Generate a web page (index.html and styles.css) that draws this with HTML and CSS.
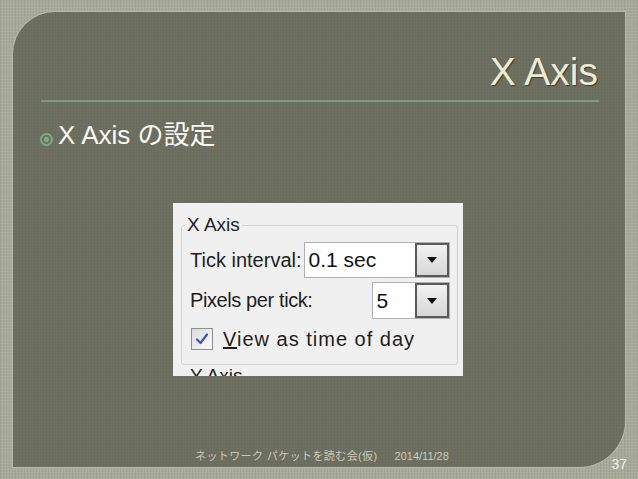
FILE: index.html
```html
<!DOCTYPE html>
<html lang="ja">
<head>
    <meta charset="UTF-8">
    <title>X Axis</title>
    <link rel="stylesheet" href="styles.css">
</head>
<body>
    <div class="slide">
        <div class="panel">
            <h1 class="title">X Axis</h1>
            <div class="rule"></div>
            <div class="bullet-row">
                <span class="bullet"></span>
                <span>X Axis の設定</span>
            </div>

            <div class="shot">
                <fieldset class="group">
                    <legend>X Axis</legend>
                    <div class="row row-tick">
                        <span class="label">Tick interval:</span>
                        <div class="combo combo-wide">
                            <span class="combo-value">0.1 sec</span>
                            <span class="combo-btn"><span class="arrow"></span></span>
                        </div>
                    </div>
                    <div class="row row-pixels">
                        <span class="label label-pixels">Pixels per tick:</span>
                        <div class="combo combo-small">
                            <span class="combo-value">5</span>
                            <span class="combo-btn"><span class="arrow"></span></span>
                        </div>
                    </div>
                    <div class="row row-check">
                        <span class="checkbox">
                            <svg width="14" height="14" viewBox="0 0 14 14">
                                <path d="M2 7.5 L5.5 11 L12 2.5" fill="none" stroke="#3f57a6" stroke-width="2.2" stroke-linejoin="round" stroke-linecap="round"/>
                            </svg>
                        </span>
                        <span class="check-label"><u>V</u>iew as time of day</span>
                    </div>
                </fieldset>
                <div class="next-group">Y Axis</div>
            </div>

            <div class="footer">
                <span class="footer-title">ネットワーク パケットを読む会(仮)</span>
                <span class="footer-date">2014/11/28</span>
                <span class="page-num">37</span>
            </div>
        </div>
    </div>
</body>
</html>
```

FILE: styles.css
```css
body { margin: 0; font-family: "Liberation Sans", "Noto Sans CJK JP", sans-serif; }

.slide {
    width: 638px; height: 479px; box-sizing: border-box; padding: 12px 13px 12px 13px;
    background-color: #a8aa99;
    background-image:
        repeating-linear-gradient(0deg, rgba(255,255,255,0.06) 0 1px, transparent 1px 3px),
        repeating-linear-gradient(90deg, rgba(0,0,0,0.05) 0 1px, transparent 1px 3px);
}

.panel {
    height: 455px; box-sizing: border-box; display: flex; flex-direction: column;
    background-color: #6c6e5f;
    background-image:
        repeating-linear-gradient(0deg, rgba(255,255,255,0.025) 0 1px, transparent 1px 3px),
        repeating-linear-gradient(90deg, rgba(0,0,0,0.03) 0 1px, transparent 1px 3px);
    border-radius: 42px 0 46px 0;
    box-shadow: 0 0 0 1px #b6b9a6;
}

.title {
    margin: 37px 0 0 0; padding-right: 27px; text-align: right;
    font-size: 39px; line-height: 46px; font-weight: normal;
    color: #ecebd4; text-shadow: 1px 1px 1px #3d3e34;
}

.rule { height: 2px; margin: 5px 26px 0 28px; background: #829a7c; }

.bullet-row {
    display: flex; align-items: center; margin-top: 18px; padding-left: 27px;
    font-size: 26px; line-height: 30px; color: #fbfbf5;
}
.bullet {
    align-self: flex-start; margin: 13px 5px 0 0;
    width: 13px; height: 13px; box-sizing: border-box; border-radius: 50%;
    border: 2px solid #7aab87;
    background: radial-gradient(circle, #7aab87 0 2.5px, transparent 3px);
}

/* screenshot of the dialog */
.shot {
    width: 290px; height: 173px; box-sizing: border-box; overflow: hidden;
    margin: 53px 0 0 160px; padding: 11px 6px 0 8px;
    background: #f0f0f0; color: #1e1e1e; font-size: 20px;
}
.group { margin: 0; padding: 0 7px 14px 3px; border: 1px solid #d3d3d3; border-radius: 3px; }
.group legend { padding: 0 2px; font-size: 19px; line-height: 22px; }

.row { display: flex; align-items: center; padding-left: 5px; white-space: nowrap; }
.label { flex-shrink: 0; }
.row-tick { height: 36px; margin-top: 6px; }
.row-pixels { height: 37px; margin-top: 4px; justify-content: space-between; }
.row-check { height: 22px; margin-top: 9px; padding-left: 6px; }
.label-pixels { letter-spacing: -0.4px; }

.combo { display: flex; flex-shrink: 0; height: 100%; box-sizing: border-box; border: 1px solid #b0b0b0; background: #fff; }
.combo-wide { width: 146px; margin-left: 2px; }
.combo-small { width: 78px; }
.combo-value { flex: 1; display: flex; align-items: center; padding-left: 4px; font-size: 21px; color: #111; }
.combo-btn {
    width: 34px; box-sizing: border-box; display: flex; align-items: center; justify-content: center;
    border: 2px solid #5a5a5a; background: linear-gradient(#f3f3f3, #d6d6d6);
}
.arrow { width: 0; height: 0; border-left: 5px solid transparent; border-right: 5px solid transparent; border-top: 6px solid #111; }

.checkbox {
    width: 22px; height: 22px; box-sizing: border-box; display: flex; align-items: center; justify-content: center;
    border: 1px solid #8e8f8f; background: linear-gradient(135deg, #dcdcdc, #fafafa);
}
.check-label { margin-left: 10px; letter-spacing: 1px; }

.next-group { padding-left: 9px; font-size: 19px; line-height: 22px; margin-top: 0; }

.footer { display: flex; align-items: flex-end; margin-top: auto; height: 24px; padding-left: 182px; }
.footer-title, .footer-date { font-size: 11px; line-height: 14px; margin-bottom: 4px; color: #c9cabb; }
.footer-title { letter-spacing: 0.4px; }
.footer-date { margin-left: 17px; }
.page-num { margin: 0 -2px -5px auto; font-size: 14px; line-height: 16px; color: #f2f2ea; }
```
